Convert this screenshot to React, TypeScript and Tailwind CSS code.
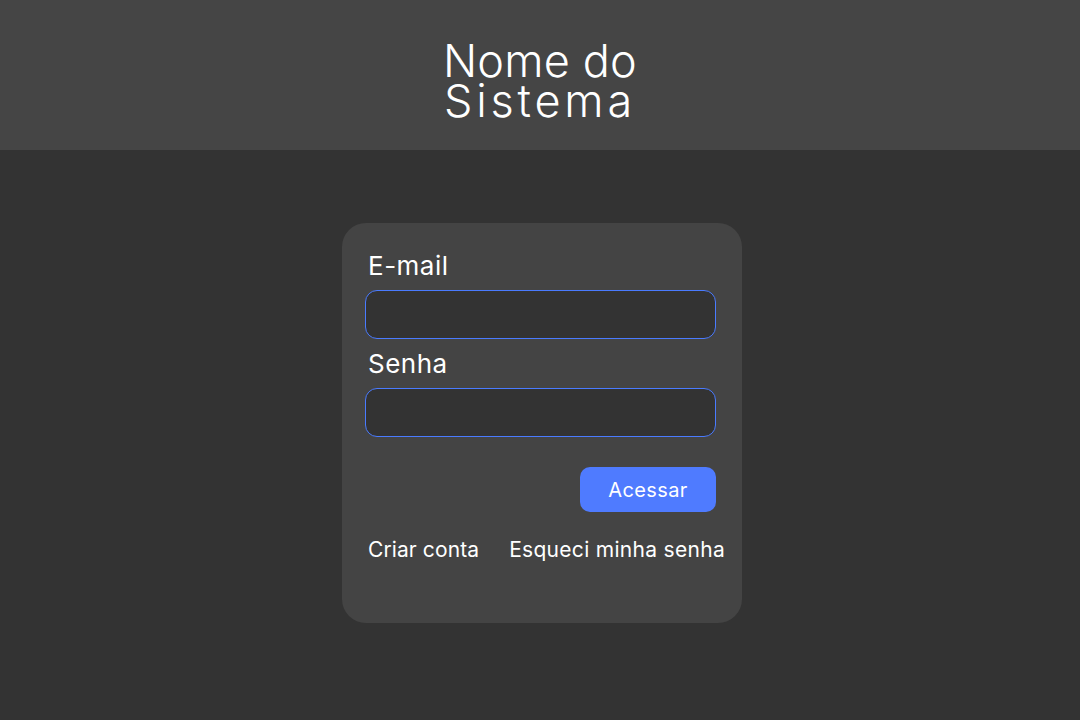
export default function App() {
  return (
    <div className="min-h-screen w-full bg-[#333333] font-['Inter','Liberation_Sans',sans-serif] text-white">
      <header className="h-[150px] bg-[#454545] flex items-center justify-center">
        <h1 className="flex flex-col items-center text-[45px] leading-[40px] font-light pt-[11px]">
          <span className="tracking-[0.2px]">Nome do</span>
          <span className="tracking-[3.8px]">Sistema</span>
        </h1>
      </header>

      <main className="flex justify-center pt-[73px]">
        <div className="ml-[4px] w-[400px] h-[400px] bg-[#444444] rounded-[24px] pl-[23px] pr-[26px] pt-[27px]">
          <label className="block text-[26px] leading-[32px] tracking-[0.5px] ml-[3px]">E-mail</label>
          <input
            type="email"
            className="mt-[8px] block w-[351px] h-[49px] rounded-[12px] border border-solid border-[#4a7bff] bg-[#333333] px-3 outline-none"
          />
          <label className="block mt-[9px] text-[26px] leading-[32px] tracking-[0.5px] ml-[3px]">Senha</label>
          <input
            type="password"
            className="mt-[8px] block w-[351px] h-[49px] rounded-[12px] border border-solid border-[#4a7bff] bg-[#333333] px-3 outline-none"
          />
          <div className="flex justify-end w-[351px] mt-[30px]">
            <button className="w-[136px] h-[45px] rounded-[10px] bg-[#4f7bff] text-[20px] leading-[28px] tracking-[0.4px]">
              Acessar
            </button>
          </div>
          <div className="flex items-center mt-[24px] ml-[3px] text-[21px] leading-[28px] whitespace-nowrap">
            <a className="cursor-pointer tracking-[0.1px]">Criar conta</a>
            <a className="cursor-pointer ml-[30px] tracking-[0.3px]">Esqueci minha senha</a>
          </div>
        </div>
      </main>
    </div>
  );
}
